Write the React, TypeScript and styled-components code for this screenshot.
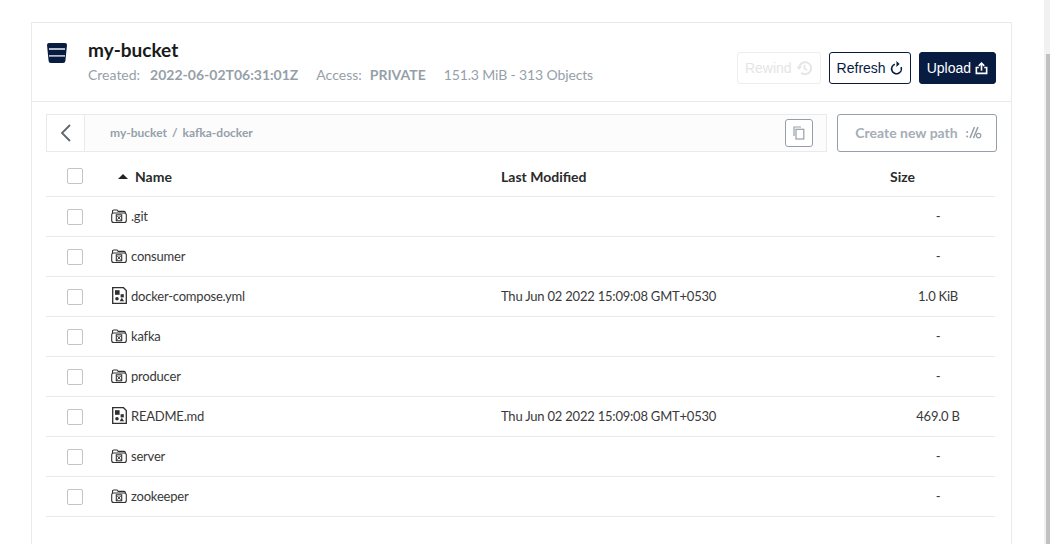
import React from "react";
import styled, { createGlobalStyle } from "styled-components";

const Global = createGlobalStyle`
  html, body { margin: 0; padding: 0; height: 544px; overflow: hidden; background: #fff; }
  body { font-family: Lato, "Liberation Sans", sans-serif; color: #393939; }
  * { box-sizing: border-box; }
`;

const Page = styled.div`
  padding: 22px 0 0 31px;
  height: 544px;
  overflow: hidden;
`;

const Card = styled.main`
  width: 981px;
  height: 540px;
  border: 1px solid #eaeaea;
`;

const Header = styled.header`
  height: 79px;
  border-bottom: 1px solid #eaeaea;
  display: flex;
  padding: 0 15px;
`;

const BucketIconBox = styled.div`
  width: 41px;
  padding-top: 20px;
`;

const TitleBlock = styled.div`
  flex: 1;
  padding-top: 16px;
`;

const Title = styled.h1`
  margin: 0;
  font-size: 19px;
  line-height: 22px;
  font-weight: 700;
  color: #1a1a1a;
`;

const Meta = styled.div`
  display: flex;
  margin-top: 5px;
  font-size: 14px;
  line-height: 18px;
  color: #969fa9;
`;

const MetaItem = styled.span<{ $gap?: number }>`
  margin-right: 18px;
  white-space: nowrap;
  b { margin-left: ${(p) => p.$gap ?? 8}px; font-weight: 700; }
`;

const Stats = styled(MetaItem)`
  letter-spacing: -0.13px;
`;

const Actions = styled.div`
  display: flex;
  gap: 8px;
  padding-top: 29px;
  align-items: flex-start;
`;

const Btn = styled.button<{ $variant: "ghost" | "outline" | "solid" }>`
  height: 32px;
  border-radius: 3px;
  padding: 0 7px;
  display: flex;
  align-items: center;
  gap: 4px;
  font-family: "Liberation Sans", Arial, sans-serif;
  font-size: 14px;
  font-weight: 400;
  background: ${(p) => (p.$variant === "solid" ? "#081c42" : "#fff")};
  color: ${(p) => (p.$variant === "solid" ? "#fff" : p.$variant === "outline" ? "#081c42" : "#e5e5e5")};
  border: 1px solid ${(p) => (p.$variant === "ghost" ? "#eeeeee" : "#081c42")};
`;

const PathRow = styled.div`
  display: flex;
  margin: 12px 0 0 14px;
  height: 38px;
  width: 951px;
  align-items: flex-start;
`;

const Breadcrumb = styled.div`
  width: 781px;
  height: 38px;
  display: flex;
  align-items: center;
  background: #fcfcfd;
  border: 1px solid #eaeaea;
`;

const BackCell = styled.div`
  width: 38px;
  height: 36px;
  border-right: 1px solid #eaeaea;
  background: #fff;
  display: flex;
  align-items: center;
  justify-content: center;
`;

const Crumbs = styled.div`
  flex: 1;
  padding: 0 0 2px 25px;
  font-size: 12px;
  font-weight: 700;
  color: #969fa9;
  white-space: nowrap;
`;

const Sep = styled.span`
  margin: 0 5px;
`;

const CopyBtn = styled.div`
  width: 28px;
  height: 28px;
  border: 1px solid #969fa9;
  border-radius: 3px;
  margin-right: 13px;
  display: flex;
  align-items: center;
  justify-content: center;
  background: #fff;
`;

const NewPath = styled.button`
  margin-left: 10px;
  width: 160px;
  height: 38px;
  background: #fff;
  border: 1px solid #969fa9;
  border-radius: 3px;
  display: flex;
  align-items: center;
  justify-content: center;
  gap: 8px;
  padding: 0 0 2px 3px;
  font-family: Lato, sans-serif;
  font-size: 14px;
  font-weight: 700;
  color: #a5adb6;
`;

const Table = styled.div`
  width: 949px;
  margin-left: 14px;
`;

const Row = styled.div<{ $head?: boolean }>`
  display: grid;
  grid-template-columns: 65px 390px 389px 96px;
  align-items: center;
  height: ${(p) => (p.$head ? "45px" : "40px")};
  padding-top: ${(p) => (p.$head ? "4px" : "0")};
  border-bottom: 1px solid #e9e9e9;
  font-size: 13px;
  letter-spacing: ${(p) => (p.$head ? "0" : "-0.21px")};
  color: #393939;
  font-weight: ${(p) => (p.$head ? 700 : 400)};
`;

const Check = styled.span`
  display: block;
  width: 16px;
  height: 16px;
  margin-left: 21px;
  border: 1px solid #c4c4c4;
  border-radius: 2px;
  background: #fff;
`;

const Cell = styled.div`
  padding-bottom: 2px;
`;

const NameCell = styled(Cell)`
  display: flex;
  align-items: center;
  gap: 4px;
`;

const IconSlot = styled.span`
  display: flex;
  align-items: center;
  justify-content: center;
  width: 16px;
  height: 16px;
`;

const HeadName = styled.div`
  display: flex;
  align-items: center;
  gap: 7px;
  padding-left: 7px;
  color: #2b2b2b;
  font-size: 14px;
`;

const HeadText = styled.div`
  color: #2b2b2b;
  font-size: 14px;
`;

const Arrow = styled.span`
  width: 0;
  height: 0;
  border-left: 5px solid transparent;
  border-right: 5px solid transparent;
  border-bottom: 5px solid #222;
`;

const Size = styled(Cell)`
  text-align: center;
`;

const ScrollTrack = styled.div`
  position: fixed;
  top: 0;
  right: 0;
  width: 6px;
  height: 544px;
  background: #f1f1f1;
`;

const ScrollThumb = styled.div`
  position: absolute;
  top: 54px;
  right: 0;
  left: 2px;
  bottom: 0;
  background: #c1c1c1;
`;

const BucketIcon = () => (
  <svg width="20" height="20" viewBox="0 0 20 20" style={{ display: "block" }}>
    <path d="M0 2 Q0 0 2 0 H18 Q20 0 20 2 L18.4 18 Q18.2 20 16 20 H4 Q1.8 20 1.6 18Z" fill="#081c42" />
    <rect x="2" y="5.2" width="16" height="1.6" fill="#dfe3ea" />
    <rect x="2" y="12.2" width="16" height="1.4" fill="#dfe3ea" />
  </svg>
);

const FolderIcon = () => (
  <svg width="16" height="16" viewBox="0 0 16 16" fill="none" stroke="#2f2f2f" strokeWidth="1.1">
    <path d="M1.5 5 V3.2 Q1.5 2 2.7 2 H6 L7.2 3.4 H13 Q14.3 3.4 14.3 4.6 V5.5" />
    <rect x="0.7" y="5" width="14.6" height="9.5" rx="2" />
    <rect x="5.3" y="6.8" width="5.4" height="6" strokeWidth="1.1" />
    <path d="M6.4 8 L9.6 11.6 M9.6 8 L6.4 11.6" strokeWidth="1" />
  </svg>
);

const FileIcon = () => (
  <svg width="15" height="17" viewBox="0 0 15 17" fill="none">
    <path d="M0.7 0.7 H11.5 L14.3 3.5 V16.3 H0.7Z" stroke="#2f2f2f" strokeWidth="1.3" />
    <rect x="3" y="3.2" width="4.6" height="4.6" fill="#2f2f2f" />
    <rect x="8.6" y="7.2" width="3.2" height="3.2" fill="#2f2f2f" />
    <circle cx="5" cy="11.8" r="1.8" fill="#2f2f2f" />
    <path d="M9.8 10.8 L12.2 14.2 H7.6Z" fill="#2f2f2f" />
  </svg>
);

const RewindIcon = () => (
  <svg width="17" height="16" viewBox="0 0 24 24" fill="none" stroke="#e5e5e5" strokeWidth="3">
    <path d="M4 12 A9 9 0 1 1 7 19" />
    <path d="M0.5 10 L4 14 L7.5 10" fill="#e5e5e5" strokeWidth="1.5" />
    <path d="M12 7 V13 L16 15" strokeWidth="2.4" />
  </svg>
);

const RefreshIcon = () => (
  <svg width="13" height="14" viewBox="0 0 24 24" fill="none" stroke="#081c42" strokeWidth="3">
    <path d="M12 4.5 A9 9 0 1 0 21 13.5" transform="rotate(-20 12 13.5)" />
    <path d="M12 0 L17 4.5 L12 9" fill="#081c42" strokeWidth="1.5" />
  </svg>
);

const UploadIcon = () => (
  <svg width="13" height="14" viewBox="0 0 24 24" fill="none" stroke="#fff" strokeWidth="3">
    <path d="M7 11 H2.5 V22 H21.5 V11 H17" />
    <path d="M12 17 V3" />
    <path d="M7 8 L12 3 L17 8" />
  </svg>
);

const BackIcon = () => (
  <svg width="12" height="18" viewBox="0 0 12 18" fill="none" stroke="#5f6670" strokeWidth="1.8">
    <path d="M10 1 L2 9 L10 17" />
  </svg>
);

const CopyIcon = () => (
  <svg width="14" height="14" viewBox="0 0 14 14" fill="none" stroke="#969fa9" strokeWidth="1.2">
    <path d="M2 10 V1 H9" />
    <rect x="4" y="3.3" width="7.8" height="9.7" />
  </svg>
);

const PathIcon = () => (
  <svg width="16" height="14" viewBox="0 0 16 14" fill="none" stroke="#969fa9" strokeWidth="1.5">
    <circle cx="1.2" cy="7" r="1" fill="#969fa9" stroke="none" />
    <circle cx="1.2" cy="11.5" r="1" fill="#969fa9" stroke="none" />
    <path d="M4 13 L8.5 2" />
    <path d="M7.5 13 L12 2" />
    <circle cx="12.6" cy="10.6" r="2.2" strokeWidth="1.2" />
  </svg>
);

type Item = { name: string; kind: "folder" | "file"; modified?: string; size?: string };

const items: Item[] = [
  { name: ".git", kind: "folder" },
  { name: "consumer", kind: "folder" },
  { name: "docker-compose.yml", kind: "file", modified: "Thu Jun 02 2022 15:09:08 GMT+0530", size: "1.0 KiB" },
  { name: "kafka", kind: "folder" },
  { name: "producer", kind: "folder" },
  { name: "README.md", kind: "file", modified: "Thu Jun 02 2022 15:09:08 GMT+0530", size: "469.0 B" },
  { name: "server", kind: "folder" },
  { name: "zookeeper", kind: "folder" },
];

export default function App() {
  return (
    <Page>
      <Global />
      <Card>
        <Header>
          <BucketIconBox>
            <BucketIcon />
          </BucketIconBox>
          <TitleBlock>
            <Title>my-bucket</Title>
            <Meta>
              <MetaItem $gap={10}>Created:<b>2022-06-02T06:31:01Z</b></MetaItem>
              <MetaItem>Access:<b>PRIVATE</b></MetaItem>
              <Stats>151.3 MiB - 313 Objects</Stats>
            </Meta>
          </TitleBlock>
          <Actions>
            <Btn $variant="ghost">Rewind <RewindIcon /></Btn>
            <Btn $variant="outline">Refresh <RefreshIcon /></Btn>
            <Btn $variant="solid">Upload <UploadIcon /></Btn>
          </Actions>
        </Header>
        <PathRow>
          <Breadcrumb>
            <BackCell><BackIcon /></BackCell>
            <Crumbs>my-bucket<Sep>/</Sep>kafka-docker</Crumbs>
            <CopyBtn><CopyIcon /></CopyBtn>
          </Breadcrumb>
          <NewPath>Create new path <PathIcon /></NewPath>
        </PathRow>
        <Table>
          <Row $head>
            <Check />
            <HeadName><Arrow />Name</HeadName>
            <HeadText>Last Modified</HeadText>
            <HeadText>Size</HeadText>
          </Row>
          {items.map((it) => (
            <Row key={it.name}>
              <Check />
              <NameCell>
                <IconSlot>{it.kind === "folder" ? <FolderIcon /> : <FileIcon />}</IconSlot>
                {it.name}
              </NameCell>
              <Cell>{it.modified}</Cell>
              <Size>{it.size ?? "-"}</Size>
            </Row>
          ))}
        </Table>
      </Card>
      <ScrollTrack><ScrollThumb /></ScrollTrack>
    </Page>
  );
}
